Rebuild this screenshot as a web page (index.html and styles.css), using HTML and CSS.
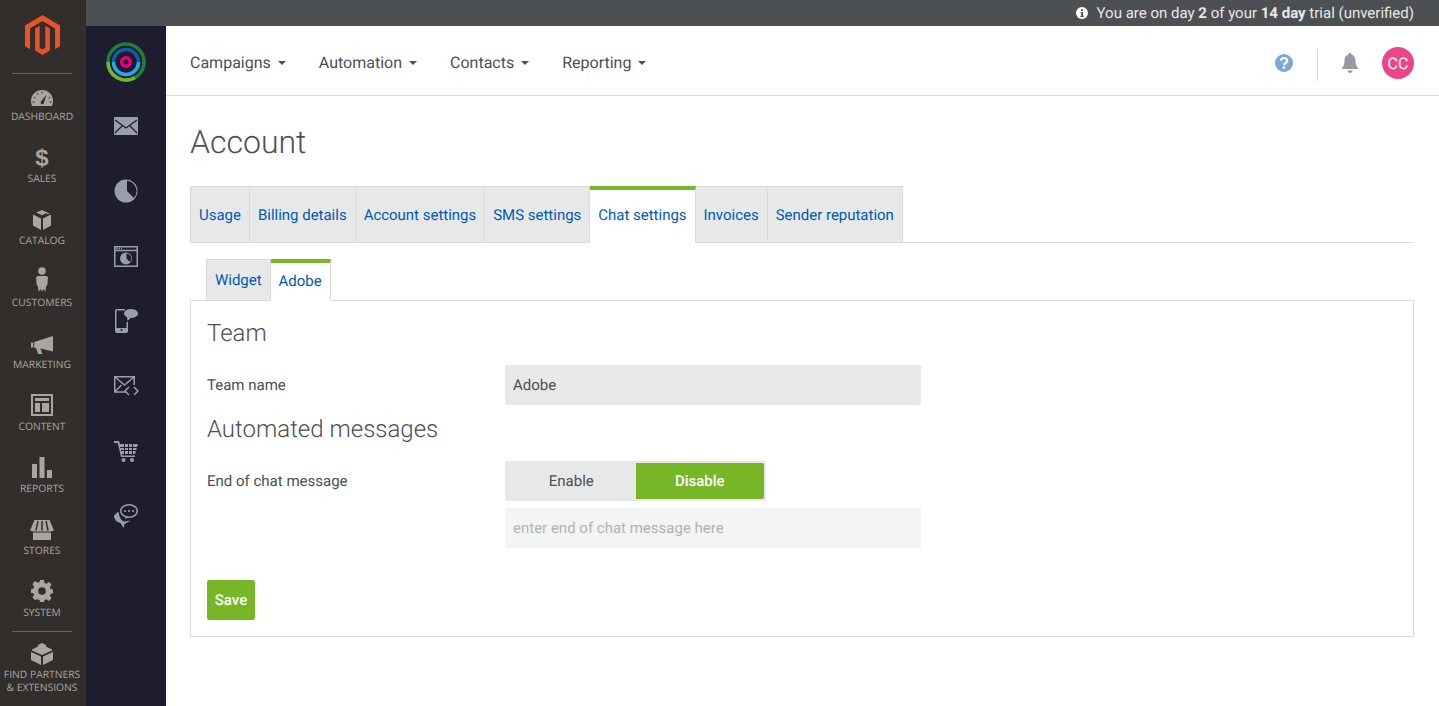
FILE: index.html
```html
<!DOCTYPE html>
<html lang="en">
<head>
    <meta charset="UTF-8">
    <meta name="viewport" content="width=device-width, initial-scale=1.0">
    <title>Account - Chat settings</title>
    <link rel="stylesheet" href="styles.css">
</head>
<body>
    <!-- Magento admin menu -->
    <nav class="admin-nav">
        <div class="admin-logo">
            <svg width="35" height="40" viewBox="0 0 36 40" preserveAspectRatio="none"><path fill="#ec5228" d="M18 0 0 10.400v20.800l5.100 3V13.400L18 6l12.900 7.400v20.800l5.100-3V10.400z"/><path fill="#ec5228" d="M18 40l-7.600-4.400V13.400l4.700-2.700v22.200l2.900 1.700 2.900-1.700V10.700l4.700 2.700v22.200z"/></svg>
        </div>
        <a class="admin-item">
            <svg width="22" height="16" viewBox="0 0 22 16"><path fill="#aaa69f" d="M11 0C5 0 0 4.800 0 10.800c0 1.900.3 3.600 1 5.200h20c.7-1.600 1-3.300 1-5.200C22 4.800 17 0 11 0z"/><path fill="#312e2b" d="M10 11.500 15.500 4.500l-2.500 8a1.700 1.700 0 1 1-3-1z"/><path stroke="#312e2b" d="M11 1.500v2M6 3l1 1.700M2.700 7l1.700 1M1.500 12h2M20.500 12h-2M19.300 7l-1.700 1"/></svg>
            <span>DASHBOARD</span>
        </a>
        <a class="admin-item">
            <span class="dollar">$</span>
            <span>SALES</span>
        </a>
        <a class="admin-item">
            <svg width="18" height="20" viewBox="0 0 18 20"><path fill="#aaa69f" d="M9 0 3.200 2.600l5.800 2.700 5.800-2.700zM0 4.600v10.800L8 20V8.500zM18 4.600 10 8.500V20l8-4.600zM16.500 3.600 10.500 .8 9.300 1.300l6 2.900z"/></svg>
            <span>CATALOG</span>
        </a>
        <a class="admin-item">
            <svg width="12" height="25" viewBox="0 0 12 25"><circle fill="#aaa69f" cx="6" cy="4" r="3.800"/><path fill="#aaa69f" d="M1.500 9h9l1.500 1.500-.7 7.500-1.300 1.500-.5 5.500-2-3-1.500 2.500-1.500-2.500-2 3-.5-5.500L.7 18 0 10.500z"/></svg>
            <span>CUSTOMERS</span>
        </a>
        <a class="admin-item">
            <svg width="22" height="18" viewBox="0 0 22 18"><path fill="#aaa69f" d="M22 0v15.500L9.500 12.500l1.800 5.500H7.200L5 12H3.200V6z"/><rect fill="#aaa69f" x="0" y="6.500" width="2.300" height="5"/></svg>
            <span>MARKETING</span>
        </a>
        <a class="admin-item">
            <svg width="22" height="22" viewBox="0 0 22 22"><path fill="#aaa69f" d="M0 0h22v22H0zm2 2v18h18V2zm2 2h14v3H4zm0 5h5v9H4zm7 0h7v9h-7z"/></svg>
            <span>CONTENT</span>
        </a>
        <a class="admin-item">
            <svg width="20" height="21" viewBox="0 0 20 21"><path fill="#aaa69f" d="M0 7h5v14H0zM7.500 0h5v21h-5zM15 13h5v8h-5z"/></svg>
            <span>REPORTS</span>
        </a>
        <a class="admin-item">
            <svg width="24" height="20" viewBox="0 0 24 20"><path fill="#aaa69f" d="M4.500 0h15l4.500 10.500-3 1H3l-3-1zM3 12.500h18V20H3z"/><path stroke="#312e2b" stroke-width="1.500" d="M8 1 6 10.500M12 1v9.500M16 1l2 9.500"/></svg>
            <span>STORES</span>
        </a>
        <a class="admin-item">
            <svg width="22" height="22" viewBox="0 0 23 23"><path fill="#aaa69f" fill-rule="evenodd" d="M9.500 0h4l.6 3.200 2 .8L18.800 2l2.700 2.800-1.800 2.700.9 2 2.400.6v3.800l-2.400.6-.9 2 1.800 2.700-2.700 2.800-2.700-2-2 .8-.6 3.200h-4l-.6-3.200-2-.8L4.200 21l-2.700-2.800 1.800-2.700-.9-2L0 13.500V9.700l2.400-.6.900-2-1.800-2.700L4.200 1l2.700 2 2-.8zM11.500 7.500a4 4 0 1 0 0 8 4 4 0 0 0 0-8z"/></svg>
            <span>SYSTEM</span>
        </a>
        <a class="admin-item admin-partners">
            <svg width="22" height="22" viewBox="0 0 22 22"><path fill="#aaa69f" d="M11 0l4 2v1.500L21 6.500v1L11 12 1 7.500v-1l6-3V2zM0 9l10 4.500V22L0 17zM22 9v8l-10 5v-8.500z"/></svg>
            <span>FIND PARTNERS<br>&amp; EXTENSIONS</span>
        </a>
    </nav>

    <div class="page">
        <div class="trial-bar">
            <svg width="12" height="12" viewBox="0 0 12 12"><circle cx="6" cy="6" r="6" fill="#fff"/><path fill="#4c5053" d="M5 2.200h2v1.800H5zM4.600 5h2.400v3.800h.7V10H4.400V8.800h.9V6.200h-.7z"/></svg>
            <span>You are on day <b>2</b> of your <b>14 day</b> trial (unverified)</span>
        </div>
        <div class="app">
            <aside class="rail">
                <svg class="rail-logo" width="40" height="40" viewBox="0 0 40 40">
                    <circle cx="20" cy="20" r="18" fill="none" stroke="#1f7f3f" stroke-width="3.500"/>
                    <path d="M2 20a18 18 0 0 0 27 15.600" fill="none" stroke="#74b32b" stroke-width="3.500"/>
                    <circle cx="20" cy="20" r="12.500" fill="none" stroke="#0f5fa8" stroke-width="3.500"/>
                    <path d="M7.500 20a12.500 12.500 0 0 0 25 0" fill="none" stroke="#29a9df" stroke-width="3.500"/>
                    <circle cx="20" cy="20" r="4.300" fill="none" stroke="#e6007e" stroke-width="3.600"/>
                </svg>
                <a class="rail-item">
                    <svg width="24" height="18" viewBox="0 0 24 18"><rect width="24" height="18" rx="1" fill="#9a9dab"/><path d="M1 3l11 8 11-8M1 16l7-7M23 16l-7-7" fill="none" stroke="#1e1c2f" stroke-width="1.200"/></svg>
                </a>
                <a class="rail-item">
                    <svg width="24" height="24" viewBox="0 0 24 24"><circle cx="12" cy="12" r="11.500" fill="#9a9dab"/><path d="M13 1.700a10.400 10.400 0 0 1 6.800 17.300L13 12z" fill="#1e1c2f"/></svg>
                </a>
                <a class="rail-item">
                    <svg width="24" height="21" viewBox="0 0 24 21"><path fill="none" stroke="#9a9dab" stroke-width="1.500" d="M.75.750h22.500v19.500H.75zM.75 4.500h22.500"/><path stroke="#9a9dab" stroke-dasharray="1.500 1" stroke-width="1.500" d="M2 2.500h6"/><circle cx="12" cy="12.500" r="6" fill="#9a9dab"/><path d="M12.500 7.500a5 5 0 0 1 3.400 8.500L12.500 12.500z" fill="#1e1c2f"/></svg>
                </a>
                <a class="rail-item">
                    <svg width="23" height="24" viewBox="0 0 23 24"><path fill="none" stroke="#9a9dab" stroke-width="1.500" d="M10 .75H2A1.250 1.250 0 0 0 .75 2v20A1.250 1.250 0 0 0 2 23.250h9A1.250 1.250 0 0 0 12.250 22V13"/><path fill="#9a9dab" d="M1 19h11v4.500H1z"/><circle cx="6.500" cy="21" r="1" fill="#1e1c2f"/><ellipse cx="16" cy="4.500" rx="7" ry="4.500" fill="#9a9dab"/><path fill="#9a9dab" d="M12 7.500l.5 4.500 3.500-3.500z"/></svg>
                </a>
                <a class="rail-item">
                    <svg width="25" height="20" viewBox="0 0 25 20"><path fill="none" stroke="#9a9dab" stroke-width="1.500" d="M12 16H.75V.75h19.500V9M.75.750l9.750 8.250L20.250.750M.75 16l6.750-7"/><path fill="none" stroke="#9a9dab" stroke-width="1.500" d="M15 11l-4 4 4 4M20 11l4 4-4 4"/></svg>
                </a>
                <a class="rail-item">
                    <svg width="24" height="21" viewBox="0 0 24 21"><path fill="#9a9dab" d="M0 0h5l1 3h18l-3 10H8l.5 1.500H21V16H7L3.800 2H0z"/><circle cx="9.500" cy="19" r="2" fill="#9a9dab"/><circle cx="18" cy="19" r="2" fill="#9a9dab"/><path stroke="#1e1c2f" d="M6 6.500h17M7 9.500h15M10.500 3v10M14.500 3v10M18.500 3v10"/></svg>
                </a>
                <a class="rail-item">
                    <svg width="24" height="24" viewBox="0 0 24 24"><ellipse cx="15" cy="7" rx="8.250" ry="6.250" fill="none" stroke="#9a9dab" stroke-width="1.500"/><path fill="#9a9dab" d="M11 12l.5 3 3-2z"/><circle cx="11" cy="7" r="1.100" fill="#9a9dab"/><circle cx="15" cy="7" r="1.100" fill="#9a9dab"/><circle cx="19" cy="7" r="1.100" fill="#9a9dab"/><path fill="#9a9dab" d="M4.500 7.500 0 11.500c0 4 2.500 6.500 6.500 7.500l3 5 1-4 6.500-3.500-6.500 1C7 17 5 12.500 4.500 7.500z"/></svg>
                </a>
            </aside>

            <main class="main">
                <header class="topnav">
                    <a class="topnav-link">Campaigns</a>
                    <a class="topnav-link">Automation</a>
                    <a class="topnav-link">Contacts</a>
                    <a class="topnav-link">Reporting</a>
                    <div class="topnav-tools">
                        <svg class="help-icon" width="18" height="18" viewBox="0 0 18 18"><circle cx="9" cy="9" r="9" fill="#7fa6d8"/><path fill="none" stroke="#fff" stroke-width="2.200" d="M5.800 6.800C5.900 5 7.200 4 9 4s3.200 1 3.200 2.700c0 2.300-3.200 2.300-3.200 4.600"/><rect x="7.800" y="12.500" width="2.400" height="2.400" fill="#fff"/></svg>
                        <span class="tools-divider"></span>
                        <svg class="bell-icon" width="16" height="20" viewBox="0 0 16 20"><path fill="#969aa1" d="M8 0c1 0 1.500.7 1.500 1.500C12 2.200 13.500 4.500 13.500 7c0 3.500.5 6 2.500 8v1H0v-1c2-2 2.500-4.500 2.500-8C2.500 4.500 4 2.200 6.500 1.500 6.500.7 7 0 8 0zM5.500 17.500h5C10.500 19 9.500 20 8 20s-2.500-1-2.500-2.500z"/></svg>
                        <span class="avatar">CC</span>
                    </div>
                </header>

                <section class="content">
                    <h1>Account</h1>
                    <div class="tabs">
                        <a class="tab">Usage</a>
                        <a class="tab">Billing details</a>
                        <a class="tab">Account settings</a>
                        <a class="tab">SMS settings</a>
                        <a class="tab active">Chat settings</a>
                        <a class="tab">Invoices</a>
                        <a class="tab">Sender reputation</a>
                    </div>
                    <div class="subtabs">
                        <a class="tab">Widget</a>
                        <a class="tab active">Adobe</a>
                    </div>
                    <div class="panel">
                        <h2>Team</h2>
                        <div class="form-row">
                            <label>Team name</label>
                            <div class="field">Adobe</div>
                        </div>
                        <h2 class="second-heading">Automated messages</h2>
                        <div class="form-row">
                            <label>End of chat message</label>
                            <div class="toggle">
                                <span class="toggle-option">Enable</span>
                                <span class="toggle-option on">Disable</span>
                            </div>
                        </div>
                        <div class="form-row message-row">
                            <label></label>
                            <div class="field placeholder">enter end of chat message here</div>
                        </div>
                        <button class="save">Save</button>
                    </div>
                </section>
            </main>
        </div>
    </div>
</body>
</html>
```

FILE: styles.css
```css
* {
    box-sizing: border-box;
}
html, body {
    height: 100%;
}
body {
    margin: 0;
    display: flex;
    height: 706px;
    overflow: hidden;
    font-family: Roboto, Arial, sans-serif;
    text-rendering: geometricPrecision;
    color: #4c5053;
    background: white;
}
svg {
    display: block;
}

/* Magento menu */
.admin-nav {
    width: 86px;
    flex: none;
    padding-right: 2px;
    background-color: #312e2b;
    display: flex;
    flex-direction: column;
    align-items: center;
}
.admin-logo {
    width: 60px;
    height: 74px;
    flex: none;
    padding: 15px 0 0 0;
    display: flex;
    justify-content: center;
    border-bottom: 1px solid #676460;
}
.admin-item {
    height: 62px;
    width: 100%;
    flex: none;
    padding-bottom: 12px;
    display: flex;
    flex-direction: column;
    align-items: center;
    justify-content: flex-end;
    gap: 5px;
    font-family: "Open Sans", Arial, sans-serif;
    font-size: 10.3px;
    line-height: 13px;
    color: #aaa69f;
    text-align: center;
    white-space: nowrap;
}
.dollar {
    font-family: "Liberation Sans", Arial, sans-serif;
    font-size: 24px;
    font-weight: bold;
    line-height: 22px;
    margin-bottom: -2px;
}
.admin-partners {
    height: 75px;
    width: 60px;
    padding: 11px 0 0 0;
    margin-top: -1px;
    gap: 4px;
    border-top: 1px solid #676460;
    justify-content: flex-start;
}

/* Top strip */
.page {
    flex: 1;
    min-width: 0;
    display: flex;
    flex-direction: column;
}
.trial-bar {
    height: 26px;
    flex: none;
    background-color: #4c5053;
    color: #e6e8e8;
    display: flex;
    align-items: center;
    justify-content: flex-end;
    gap: 9px;
    padding-right: 25px;
    font-size: 15px;
}
.app {
    flex: 1;
    display: flex;
    min-height: 0;
}

/* Dark icon rail */
.rail {
    width: 80px;
    flex: none;
    background-color: #1e1c2f;
    display: flex;
    flex-direction: column;
    align-items: center;
}
.rail-logo {
    margin: 16px 0 11.5px 0;
    flex: none;
}
.rail-item {
    height: 65px;
    flex: none;
    display: flex;
    align-items: center;
    justify-content: center;
}

.main {
    flex: 1;
    min-width: 0;
    padding-right: 25px;
}

/* Top navigation */
.topnav {
    height: 70px;
    margin-right: -25px;
    padding: 4px 25px 0 24px;
    border-bottom: 1px solid #d9dbdb;
    display: flex;
    align-items: center;
    gap: 33px;
}
.topnav-link {
    font-size: 16px;
    color: #4c5053;
    display: flex;
    align-items: center;
    gap: 7px;
}
.topnav-link::after {
    content: "";
    border-top: 4px solid #4c5053;
    border-left: 4px solid transparent;
    border-right: 4px solid transparent;
}
.topnav-tools {
    margin-left: auto;
    padding-top: 1px;
    display: flex;
    align-items: center;
}
.tools-divider {
    width: 1px;
    height: 32px;
    background-color: #d9dbdb;
    margin: 4px 24px 0 24px;
}
.avatar {
    width: 32px;
    height: 32px;
    margin-left: 24px;
    border-radius: 50%;
    background-color: #ee4488;
    color: white;
    font-size: 16px;
    display: flex;
    align-items: center;
    justify-content: center;
}

/* Page content */
.content {
    padding-left: 24px;
}
h1 {
    margin: 0;
    padding-top: 26px;
    height: 90px;
    font-size: 32px;
    line-height: 40px;
    font-weight: 300;
}
.tabs, .subtabs {
    display: flex;
    align-items: flex-end;
}
.tabs {
    height: 57px;
    border-bottom: 1px solid #d9dbdb;
}
.subtabs {
    height: 41px;
    margin-top: 16px;
    padding-left: 16px;
}
.tab {
    height: calc(100% + 1px);
    padding: 0 8px;
    display: flex;
    align-items: center;
    font-size: 14.985px;
    color: #0059b8;
    background-color: #e7e9e9;
    border: 1px solid #d9dbdb;
    border-left-width: 0;
    margin-bottom: -1px;
}
.tab:first-child {
    border-left-width: 1px;
}
.tab.active {
    padding-bottom: 3px;
    background-color: white;
    border-top: 4px solid #77b626;
    border-bottom-color: white;
    border-left-width: 0;
}
.subtabs .tab {
    position: relative;
    z-index: 1;
}
.subtabs .tab.active {
    padding-bottom: 2px;
}
.panel {
    height: 337px;
    padding: 16px;
    border: 1px solid #d9dbdb;
}
h2 {
    margin: 0;
    font-size: 24px;
    line-height: 32px;
    font-weight: 300;
}
.form-row {
    display: flex;
    align-items: center;
    margin-top: 16px;
    font-size: 15px;
}
.form-row label {
    width: 298px;
    flex: none;
}
.second-heading {
    margin-top: 8px;
}
.field {
    width: 416px;
    height: 40px;
    padding: 0 8px;
    display: flex;
    align-items: center;
    background-color: #e7e9e9;
    border-radius: 2px;
}
.placeholder {
    background-color: #f3f4f4;
    color: #b1b3b3;
}
.message-row {
    margin-top: 7px;
}
.toggle {
    width: 261px;
    height: 40px;
    padding: 2px;
    display: flex;
    background-color: #e7e9e9;
    border-radius: 2px;
}
.toggle-option {
    width: 50%;
    display: flex;
    align-items: center;
    justify-content: center;
}
.toggle-option.on {
    background-color: #77b626;
    color: white;
    font-weight: 500;
    border-radius: 0 2px 2px 0;
}
.save {
    display: block;
    margin-top: 32px;
    width: 48px;
    height: 40px;
    padding: 0;
    border: none;
    border-radius: 2px;
    background-color: #77b626;
    color: white;
    font-family: Roboto, Arial, sans-serif;
    font-size: 15px;
    font-weight: 500;
    text-rendering: geometricPrecision;
}
```
